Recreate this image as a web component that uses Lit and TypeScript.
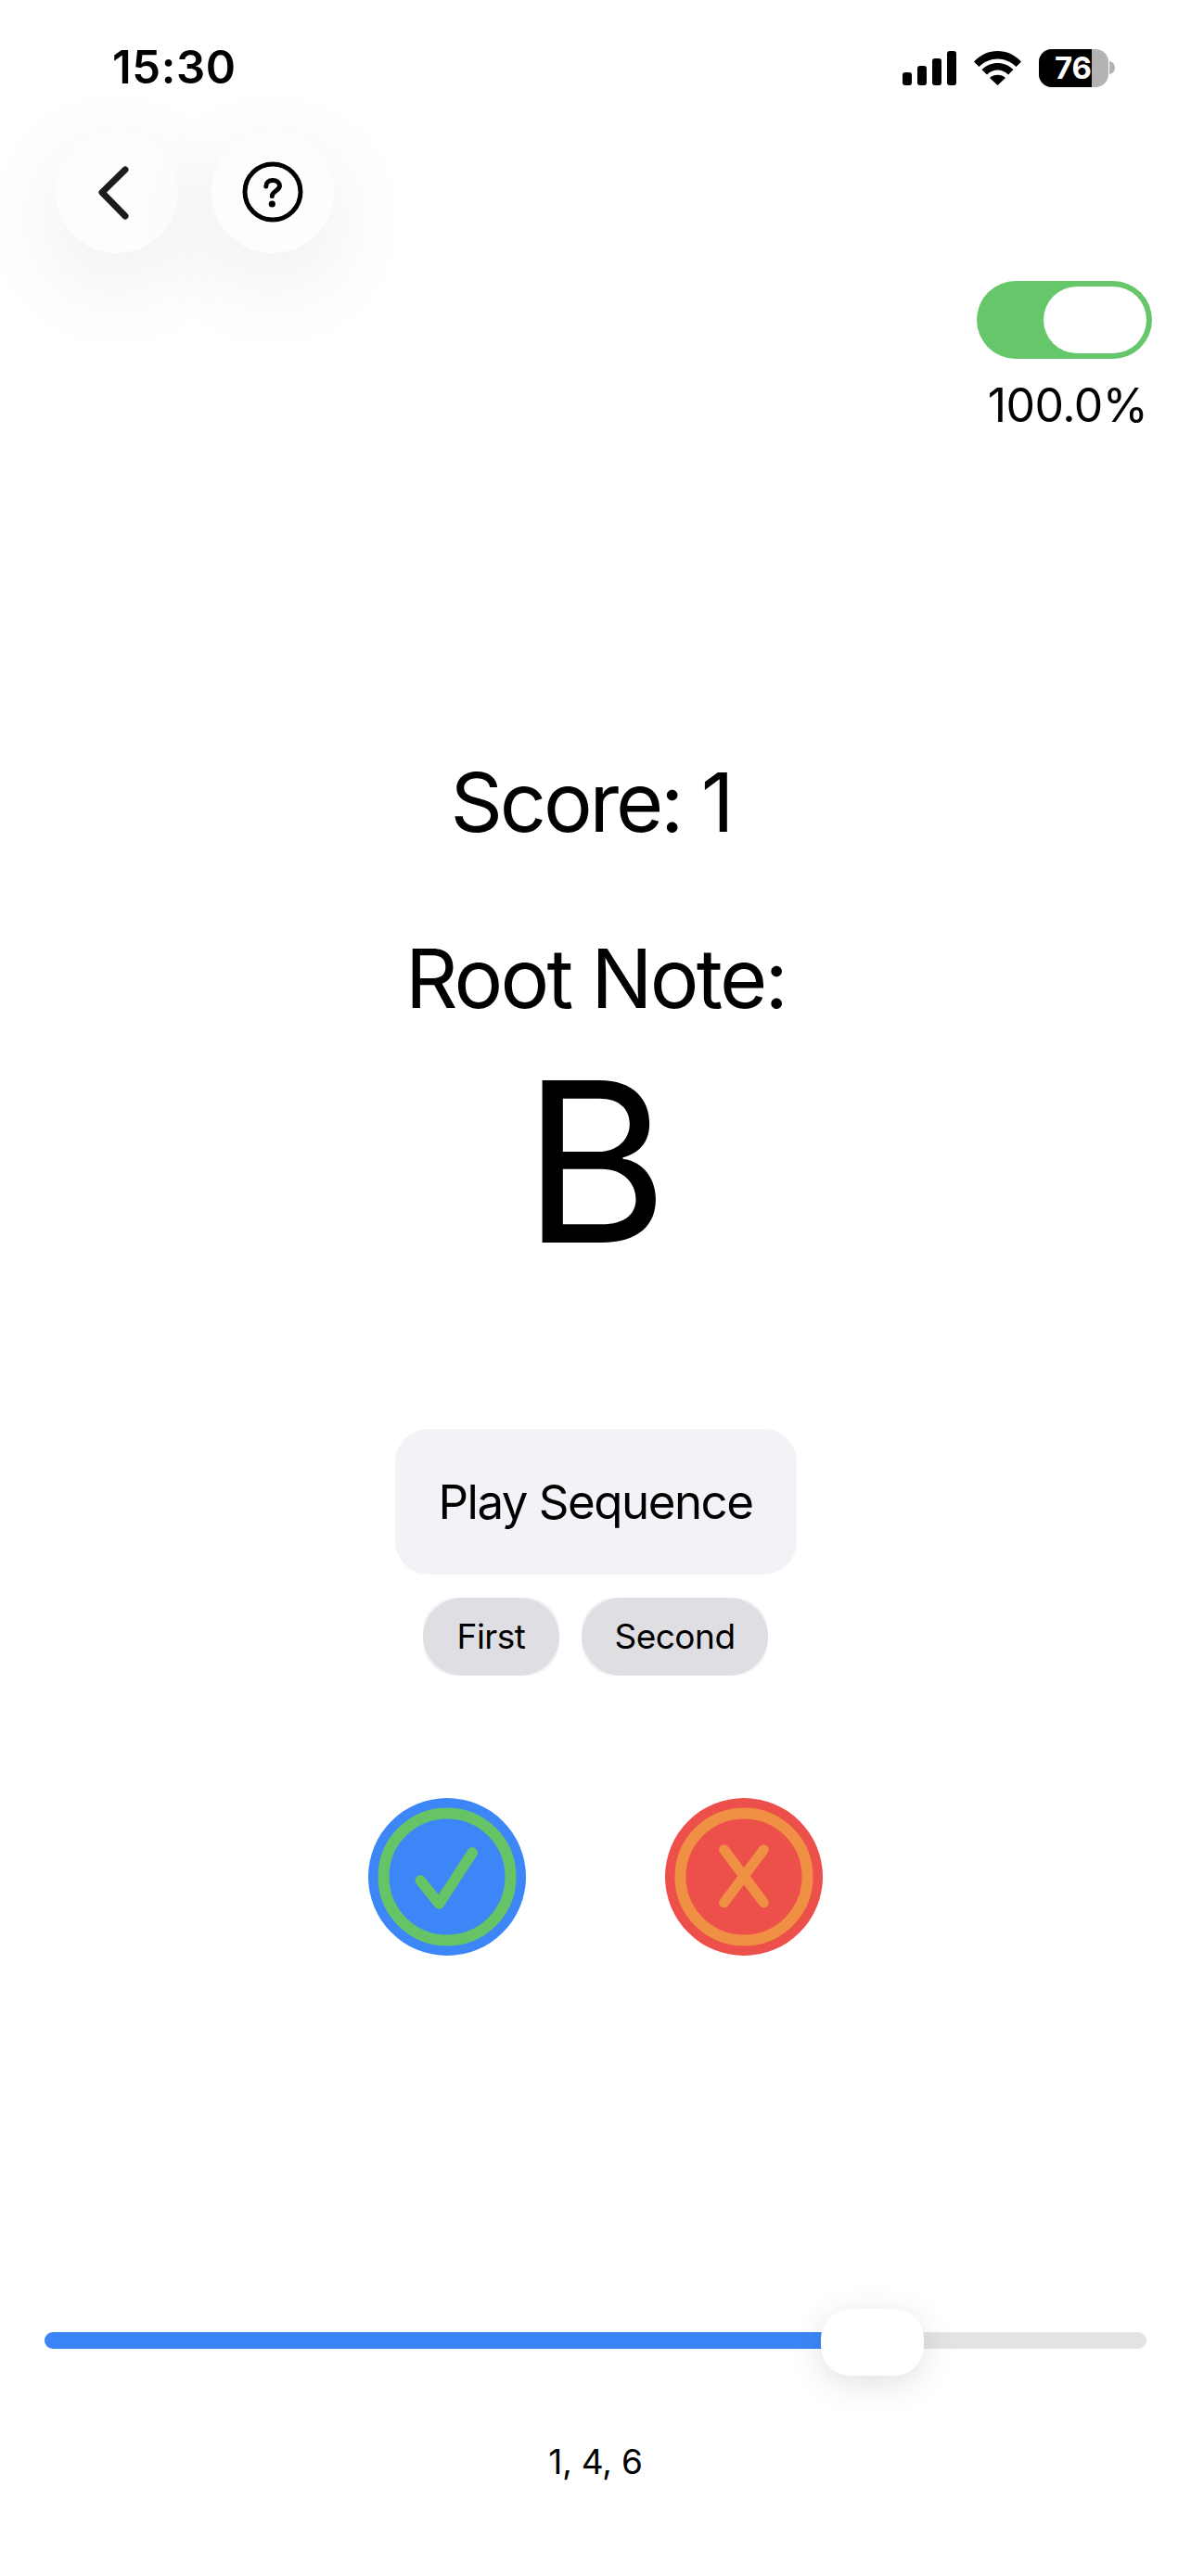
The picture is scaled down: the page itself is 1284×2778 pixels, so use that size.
import { LitElement, html, css } from "lit";
import { customElement, state } from "lit/decorators.js";

const TRACK_WIDTH = 1188;
const THUMB_WIDTH = 111;

@customElement("app-root")
export class AppRoot extends LitElement {
  @state() private sliderPosition = 892.5;

  static styles = css`
    :host {
      display: block;
      width: 1284px;
      height: 2778px;
      background: #fff;
      color: #000;
      font-family: Inter, "Liberation Sans", sans-serif;
      overflow: hidden;
    }
    .status {
      display: flex;
      justify-content: space-between;
      align-items: center;
      height: 42px;
      padding: 52px 82px 47px 121px;
    }
    .time {
      font-size: 49px;
      font-weight: 600;
      line-height: 42px;
      letter-spacing: 0.6px;
    }
    .status-icons {
      display: flex;
      align-items: center;
    }
    .signal { margin-right: 19px; display: block; }
    .wifi { margin-right: 19px; display: block; }
    .battery {
      display: flex;
      width: 75px;
      height: 41px;
      border-radius: 14px;
      overflow: hidden;
      background: #b3b3b3;
    }
    .battery-fill {
      display: flex;
      justify-content: flex-end;
      align-items: center;
      width: 57px;
      background: #000;
      color: #fff;
      font-size: 33px;
      font-weight: 700;
      line-height: 41px;
      overflow: hidden;
      white-space: nowrap;
    }
    .battery-nub { display: block; margin-left: 1px; }
    .nav {
      display: flex;
      gap: 36px;
      padding-left: 60px;
    }
    .nav-button {
      display: flex;
      align-items: center;
      justify-content: center;
      width: 132px;
      height: 132px;
      padding: 0;
      border: 0;
      border-radius: 50%;
      background: #fdfdfd;
      box-shadow: 0 30px 100px rgba(0, 0, 0, 0.08);
    }
    .volume {
      display: flex;
      flex-direction: column;
      align-items: center;
      width: 200px;
      margin: 30px 34px 0 auto;
    }
    .switch {
      display: flex;
      justify-content: flex-end;
      align-items: center;
      box-sizing: border-box;
      width: 189px;
      height: 84px;
      padding: 6px;
      border-radius: 42px;
      background: #66c66a;
      margin-left: -5px;
    }
    .switch-knob {
      width: 111px;
      height: 72px;
      border-radius: 36px;
      background: #fff;
    }
    .volume-label {
      margin: 20px 0 0 2px;
      font-size: 50px;
      line-height: 60px;
      letter-spacing: -0.6px;
      white-space: nowrap;
    }
    .game {
      display: flex;
      flex-direction: column;
      align-items: center;
    }
    .score, .root-label {
      font-size: 88px;
      line-height: 110px;
    }
    .score {
      margin: 343px 10px 0 0;
      letter-spacing: -3.2px;
    }
    .root-label {
      margin-top: 80px;
      letter-spacing: -2.8px;
    }
    .root-note {
      margin-top: 13px;
      font-size: 240px;
      line-height: 260px;
    }
    .play {
      box-sizing: border-box;
      width: 433px;
      height: 157px;
      margin-top: 158px;
      border: 0;
      border-radius: 36px;
      background: #f2f2f7;
      color: #000;
      font: inherit;
      font-size: 51px;
      letter-spacing: -1.5px;
    }
    .order {
      display: flex;
      gap: 24px;
      margin-top: 25px;
    }
    .order-button {
      height: 84px;
      padding: 0;
      border: 0;
      border-radius: 36px;
      background: #f2f2f7;
      color: #000;
      font: inherit;
      font-size: 37px;
      letter-spacing: -0.5px;
    }
    .order-pill {
      display: flex;
      align-items: center;
      justify-content: center;
      height: 84px;
      padding-bottom: 2px;
      box-sizing: border-box;
      border-radius: 42px;
      background: #dedee3;
    }
    .first { width: 147px; }
    .second { width: 201px; }
    .answers {
      display: flex;
      gap: 150px;
      margin-top: 132px;
    }
    .answer {
      display: flex;
      align-items: center;
      justify-content: center;
      box-sizing: border-box;
      width: 170px;
      height: 170px;
      padding: 0;
      border: 0;
      border-radius: 50%;
    }
    .answer svg { display: block; }
    .correct { background: #3c86f7; }
    .wrong { background: #ed4f4a; }
    .slider {
      position: relative;
      display: flex;
      align-items: center;
      height: 72px;
      margin: 381px 48px 0 48px;
    }
    .track {
      flex: 1;
      height: 18px;
      margin-bottom: 4px;
      border-radius: 9px;
      background: #e3e3e3;
      overflow: hidden;
    }
    .track-fill {
      height: 100%;
      background: #3b86f7;
    }
    .thumb {
      position: absolute;
      top: 0;
      width: 111px;
      height: 72px;
      border-radius: 32px;
      background: #fff;
      box-shadow: 0 8px 36px rgba(0, 0, 0, 0.12);
    }
    .sequence {
      margin-top: 63px;
      text-align: center;
      font-size: 37px;
      line-height: 60px;
      letter-spacing: -0.2px;
    }
  `;

  render() {
    const fillPercent = (this.sliderPosition / TRACK_WIDTH) * 100;
    const thumbLeft = this.sliderPosition - THUMB_WIDTH / 2;
    return html`
      <div class="status">
        <span class="time">15:30</span>
        <div class="status-icons">
          <svg class="signal" width="58" height="37" viewBox="0 0 58 37" fill="#000">
            <rect x="0" y="23" width="10" height="14" rx="3"></rect>
            <rect x="16" y="16" width="10" height="21" rx="3"></rect>
            <rect x="32" y="8" width="10" height="29" rx="3"></rect>
            <rect x="48" y="0" width="10" height="37" rx="3"></rect>
          </svg>
          <svg class="wifi" width="51" height="37" viewBox="0 0 51 37" fill="#000">
            <path d="M0 11.5C14.5-3.8 36.5-3.8 51 11.5L45.5 17C34 5.5 17 5.5 5.5 17Z"></path>
            <path d="M8.5 20C18 10.5 33 10.5 42.5 20L37 25.5C30 18.8 21 18.8 14 25.5Z"></path>
            <path d="M17 29C21.8 24.6 29.2 24.6 34 29L25.5 37Z"></path>
          </svg>
          <div class="battery">
            <div class="battery-fill">76</div>
          </div>
          <svg class="battery-nub" width="6" height="14" viewBox="0 0 6 14" fill="#b3b3b3">
            <path d="M0 0C3.5 0.5 6 3.5 6 7S3.5 13.5 0 14Z"></path>
          </svg>
        </div>
      </div>

      <div class="nav">
        <button class="nav-button" aria-label="Back">
          <svg width="40" height="64" viewBox="0 0 40 64" fill="none" stroke="#1c1c1e" stroke-width="7" stroke-linecap="round" stroke-linejoin="round">
            <path d="M29 8L4 32.5L29 58"></path>
          </svg>
        </button>
        <button class="nav-button" aria-label="Help">
          <svg width="68" height="68" viewBox="0 0 68 68" fill="none" stroke="#000" stroke-linecap="round">
            <circle cx="34" cy="34" r="30" stroke-width="5"></circle>
            <path d="M26.8 28C26.8 24 29.5 21.5 34 21.5C38.5 21.5 41.5 24 41.5 27.5C41.5 32.5 33.3 33 33.3 38.5" stroke-width="5"></path>
            <circle cx="33.3" cy="47" r="3.6" fill="#000" stroke="none"></circle>
          </svg>
        </button>
      </div>

      <div class="volume">
        <div class="switch"><div class="switch-knob"></div></div>
        <div class="volume-label">100.0%</div>
      </div>

      <div class="game">
        <div class="score">Score: 1</div>
        <div class="root-label">Root Note:</div>
        <div class="root-note">B</div>
        <button class="play">Play Sequence</button>
        <div class="order">
          <button class="order-button first"><span class="order-pill">First</span></button>
          <button class="order-button second"><span class="order-pill">Second</span></button>
        </div>
        <div class="answers">
          <button class="answer correct" aria-label="Correct">
            <svg width="150" height="150" viewBox="0 0 150 150" fill="none" stroke="#66c466" stroke-linecap="round" stroke-linejoin="round">
              <circle cx="75" cy="75" r="68.5" stroke-width="12"></circle>
              <path d="M46.3 79L66.3 104L102.3 49" stroke-width="11.5"></path>
            </svg>
          </button>
          <button class="answer wrong" aria-label="Wrong">
            <svg width="150" height="150" viewBox="0 0 150 150" fill="none" stroke="#ef9044" stroke-linecap="round">
              <circle cx="75" cy="75" r="68.5" stroke-width="12"></circle>
              <path d="M53.7 45.8L96.3 102.8M96.3 45.8L53.7 102.8" stroke-width="11"></path>
            </svg>
          </button>
        </div>
      </div>

      <div class="slider">
        <div class="track">
          <div class="track-fill" style="width: ${fillPercent}%"></div>
        </div>
        <div class="thumb" style="left: ${thumbLeft}px"></div>
      </div>
      <div class="sequence">1, 4, 6</div>
    `;
  }
}
